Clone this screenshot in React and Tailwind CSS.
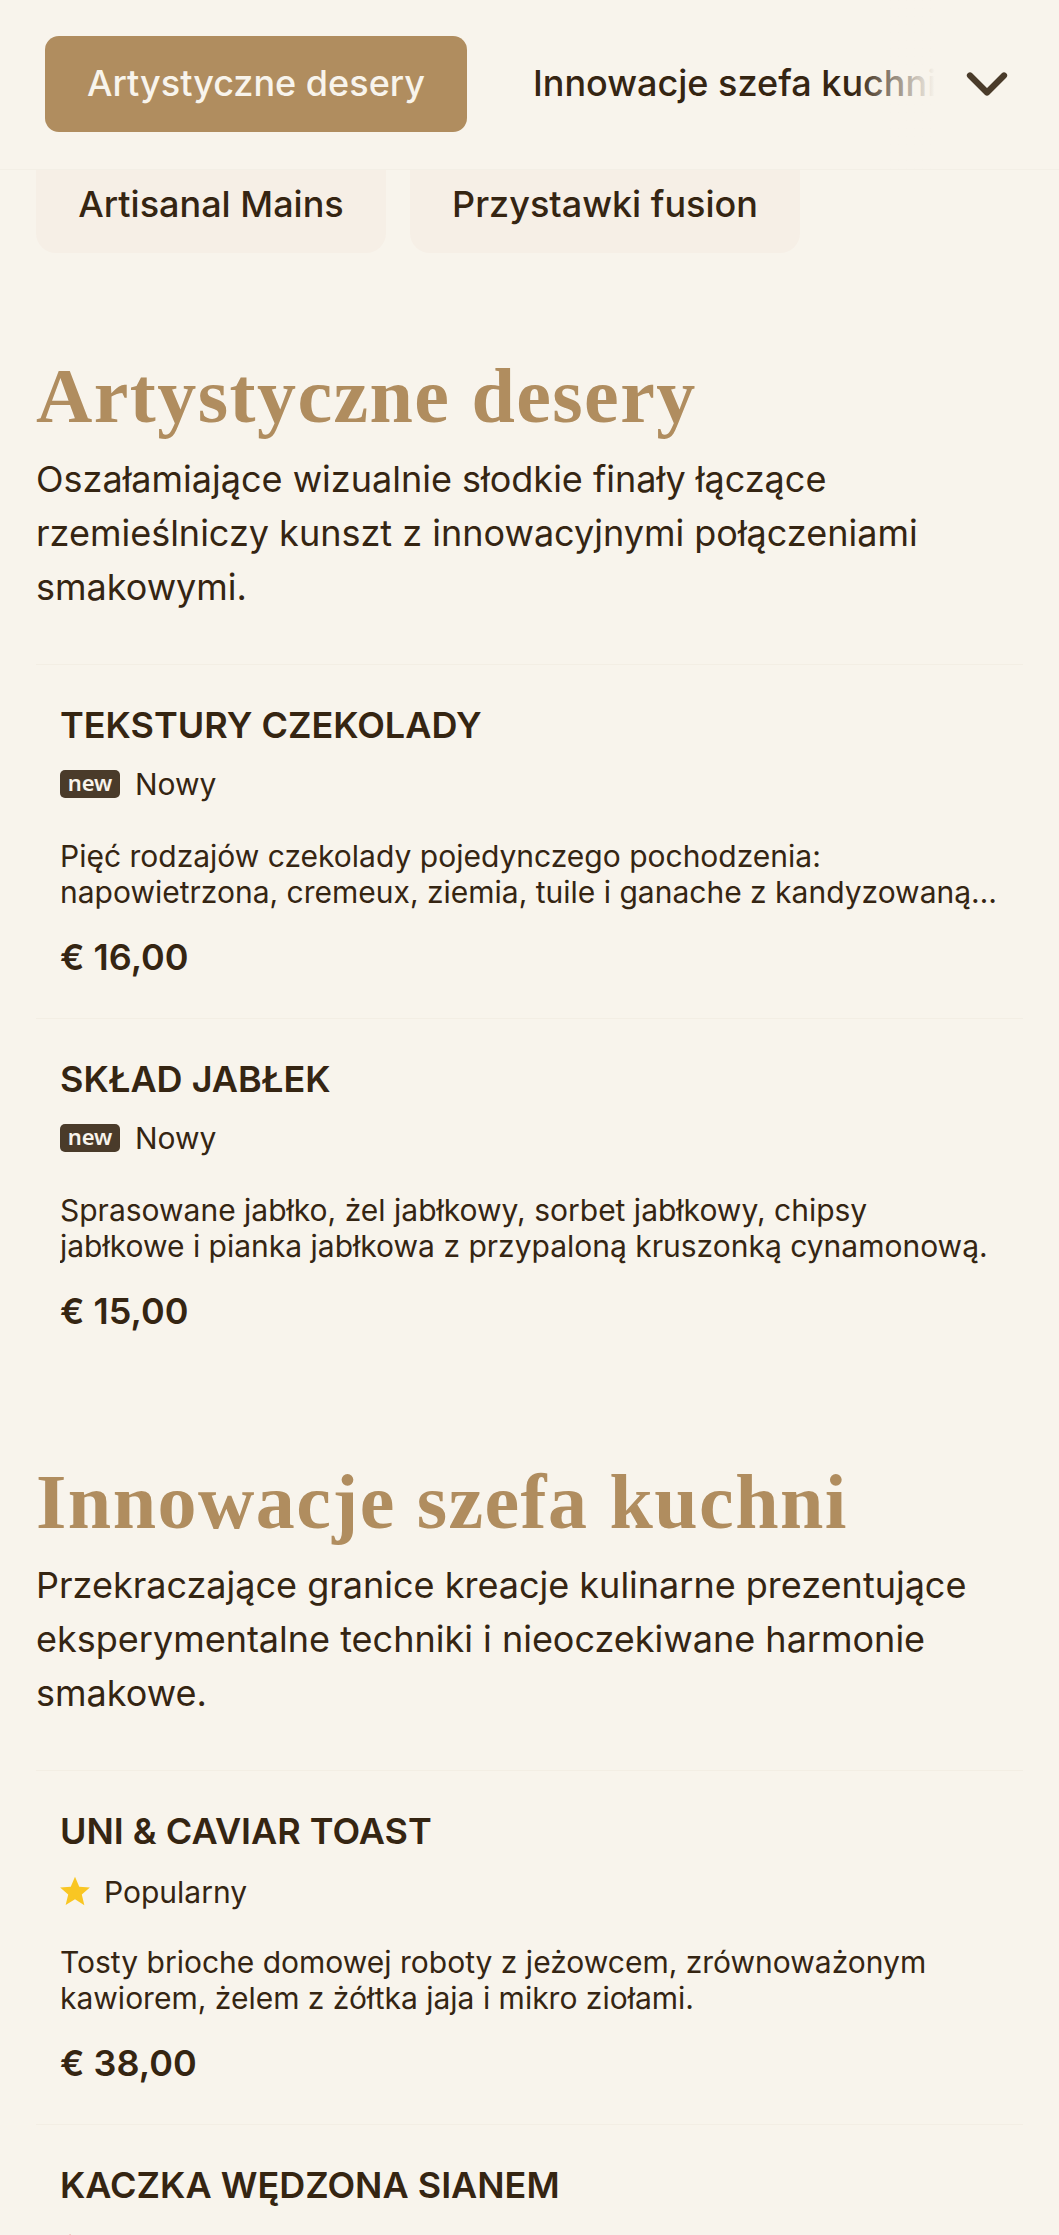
import React from 'react';
import { ChevronDown, Flame } from 'lucide-react';

const NewBadge = () => (
    <div className="flex items-center gap-[15px]">
        <span className="bg-[#4a3b2a] text-[#f8f4ec] rounded-[5px] h-[28px] w-[60px] flex items-center justify-center text-[22px] font-semibold leading-none pb-[4px] font-['Noto_Sans',sans-serif]">new</span>
        <span className="text-[30px] leading-[36px]">Nowy</span>
    </div>
);

const PopularBadge = () => (
    <div className="flex items-center gap-[12px] pt-[2px] -mb-[2px]">
        <svg viewBox="0 0 24 24" className="w-[34px] h-[34px] -ml-[2px] -mt-[2px]">
            <path d="M12 2l3 7 7.5.6-5.7 4.9 1.8 7.5L12 17.8 5.4 21.9l1.8-7.5L1.5 9.6 9 9z" fill="#f9c623" />
        </svg>
        <span className="text-[30px] leading-[36px]">Popularny</span>
    </div>
);

const SpicyBadge = () => (
    <div className="flex items-center gap-[19px] pt-[4px]">
        <Flame size={32} className="text-[#e2574c] -ml-[6px]" />
        <span className="text-[30px] leading-[36px]">Ostre</span>
    </div>
);

const Dish = ({ name, badge, desc, price, last }) => (
    <div className={`px-6 pt-[38px] pb-[39px] ${last ? '' : 'border-b border-[#f3eee4]'}`}>
        <h3 className="text-[36px] leading-[44px] font-semibold">{name}</h3>
        {badge && <div className="mt-[19px]">{badge}</div>}
        {desc && <p className="mt-[36px] text-[30px] leading-[36px] line-clamp-2">{desc}</p>}
        {price && <div className="mt-[25px] text-[36px] leading-[44px] font-semibold">{price}</div>}
    </div>
);

const Section = ({ title, text, children }) => (
    <section className="mb-[90px]">
        <h2 className="text-[78px] leading-[80px] font-bold tracking-[1.45px] text-[#b08d5f] font-['Liberation_Serif',serif]">{title}</h2>
        <p className="mt-[16px] text-[36px] leading-[54px]">{text}</p>
        <div className="mt-[50px] border-t border-[#f3eee4]">{children}</div>
    </section>
);

export default function App() {
    return (
        <div className="w-[1059px] h-[2235px] overflow-hidden bg-[#f8f4ec] text-[#352512] font-['Inter',sans-serif]">
            <header className="h-[170px] border-b border-[#f3efe6] flex items-center relative">
                <div className="flex items-center pl-[45px] pb-[2px] overflow-hidden w-[935px]">
                    <button className="shrink-0 h-[96px] w-[422px] pb-[2px] rounded-[14px] bg-[#b08d5f] text-[#f8f4ec] text-[36px] font-medium">Artystyczne desery</button>
                    <span className="shrink-0 ml-[66px] -mt-[2px] text-[36px] font-medium whitespace-nowrap">Innowacje szefa kuchni</span>
                </div>
                <div className="absolute left-[855px] top-0 w-[80px] h-[169px] bg-gradient-to-r from-transparent to-[#f8f4ec]" />
                <ChevronDown size={68} strokeWidth={2.2} className="absolute left-[953px] top-[50px] text-[#4a3b2a]" />
            </header>
            <main className="px-[36px]">
                <div className="flex gap-6 -mt-[1px]">
                    <div className="h-[84px] w-[350px] pb-[14px] rounded-b-[20px] bg-[#f6efe6] flex items-center justify-center text-[36px] font-medium">Artisanal Mains</div>
                    <div className="h-[84px] w-[390px] pb-[14px] rounded-b-[20px] bg-[#f6efe6] flex items-center justify-center text-[36px] font-medium">Przystawki fusion</div>
                </div>
                <div className="mt-[103px]">
                    <Section title="Artystyczne desery" text="Oszałamiające wizualnie słodkie finały łączące rzemieślniczy kunszt z innowacyjnymi połączeniami smakowymi.">
                        <Dish name="TEKSTURY CZEKOLADY" badge={<NewBadge />} price="€ 16,00" desc="Pięć rodzajów czekolady pojedynczego pochodzenia: napowietrzona, cremeux, ziemia, tuile i ganache z kandyzowaną pomarańczą i solą morską." />
                        <Dish last name="SKŁAD JABŁEK" badge={<NewBadge />} price="€ 15,00" desc="Sprasowane jabłko, żel jabłkowy, sorbet jabłkowy, chipsy jabłkowe i pianka jabłkowa z przypaloną kruszonką cynamonową." />
                    </Section>
                    <Section title="Innowacje szefa kuchni" text="Przekraczające granice kreacje kulinarne prezentujące eksperymentalne techniki i nieoczekiwane harmonie smakowe.">
                        <Dish name="UNI & CAVIAR TOAST" badge={<PopularBadge />} price="€ 38,00" desc="Tosty brioche domowej roboty z jeżowcem, zrównoważonym kawiorem, żelem z żółtka jaja i mikro ziołami." />
                        <Dish last name="KACZKA WĘDZONA SIANEM" badge={<SpicyBadge />} />
                    </Section>
                </div>
            </main>
        </div>
    );
}
